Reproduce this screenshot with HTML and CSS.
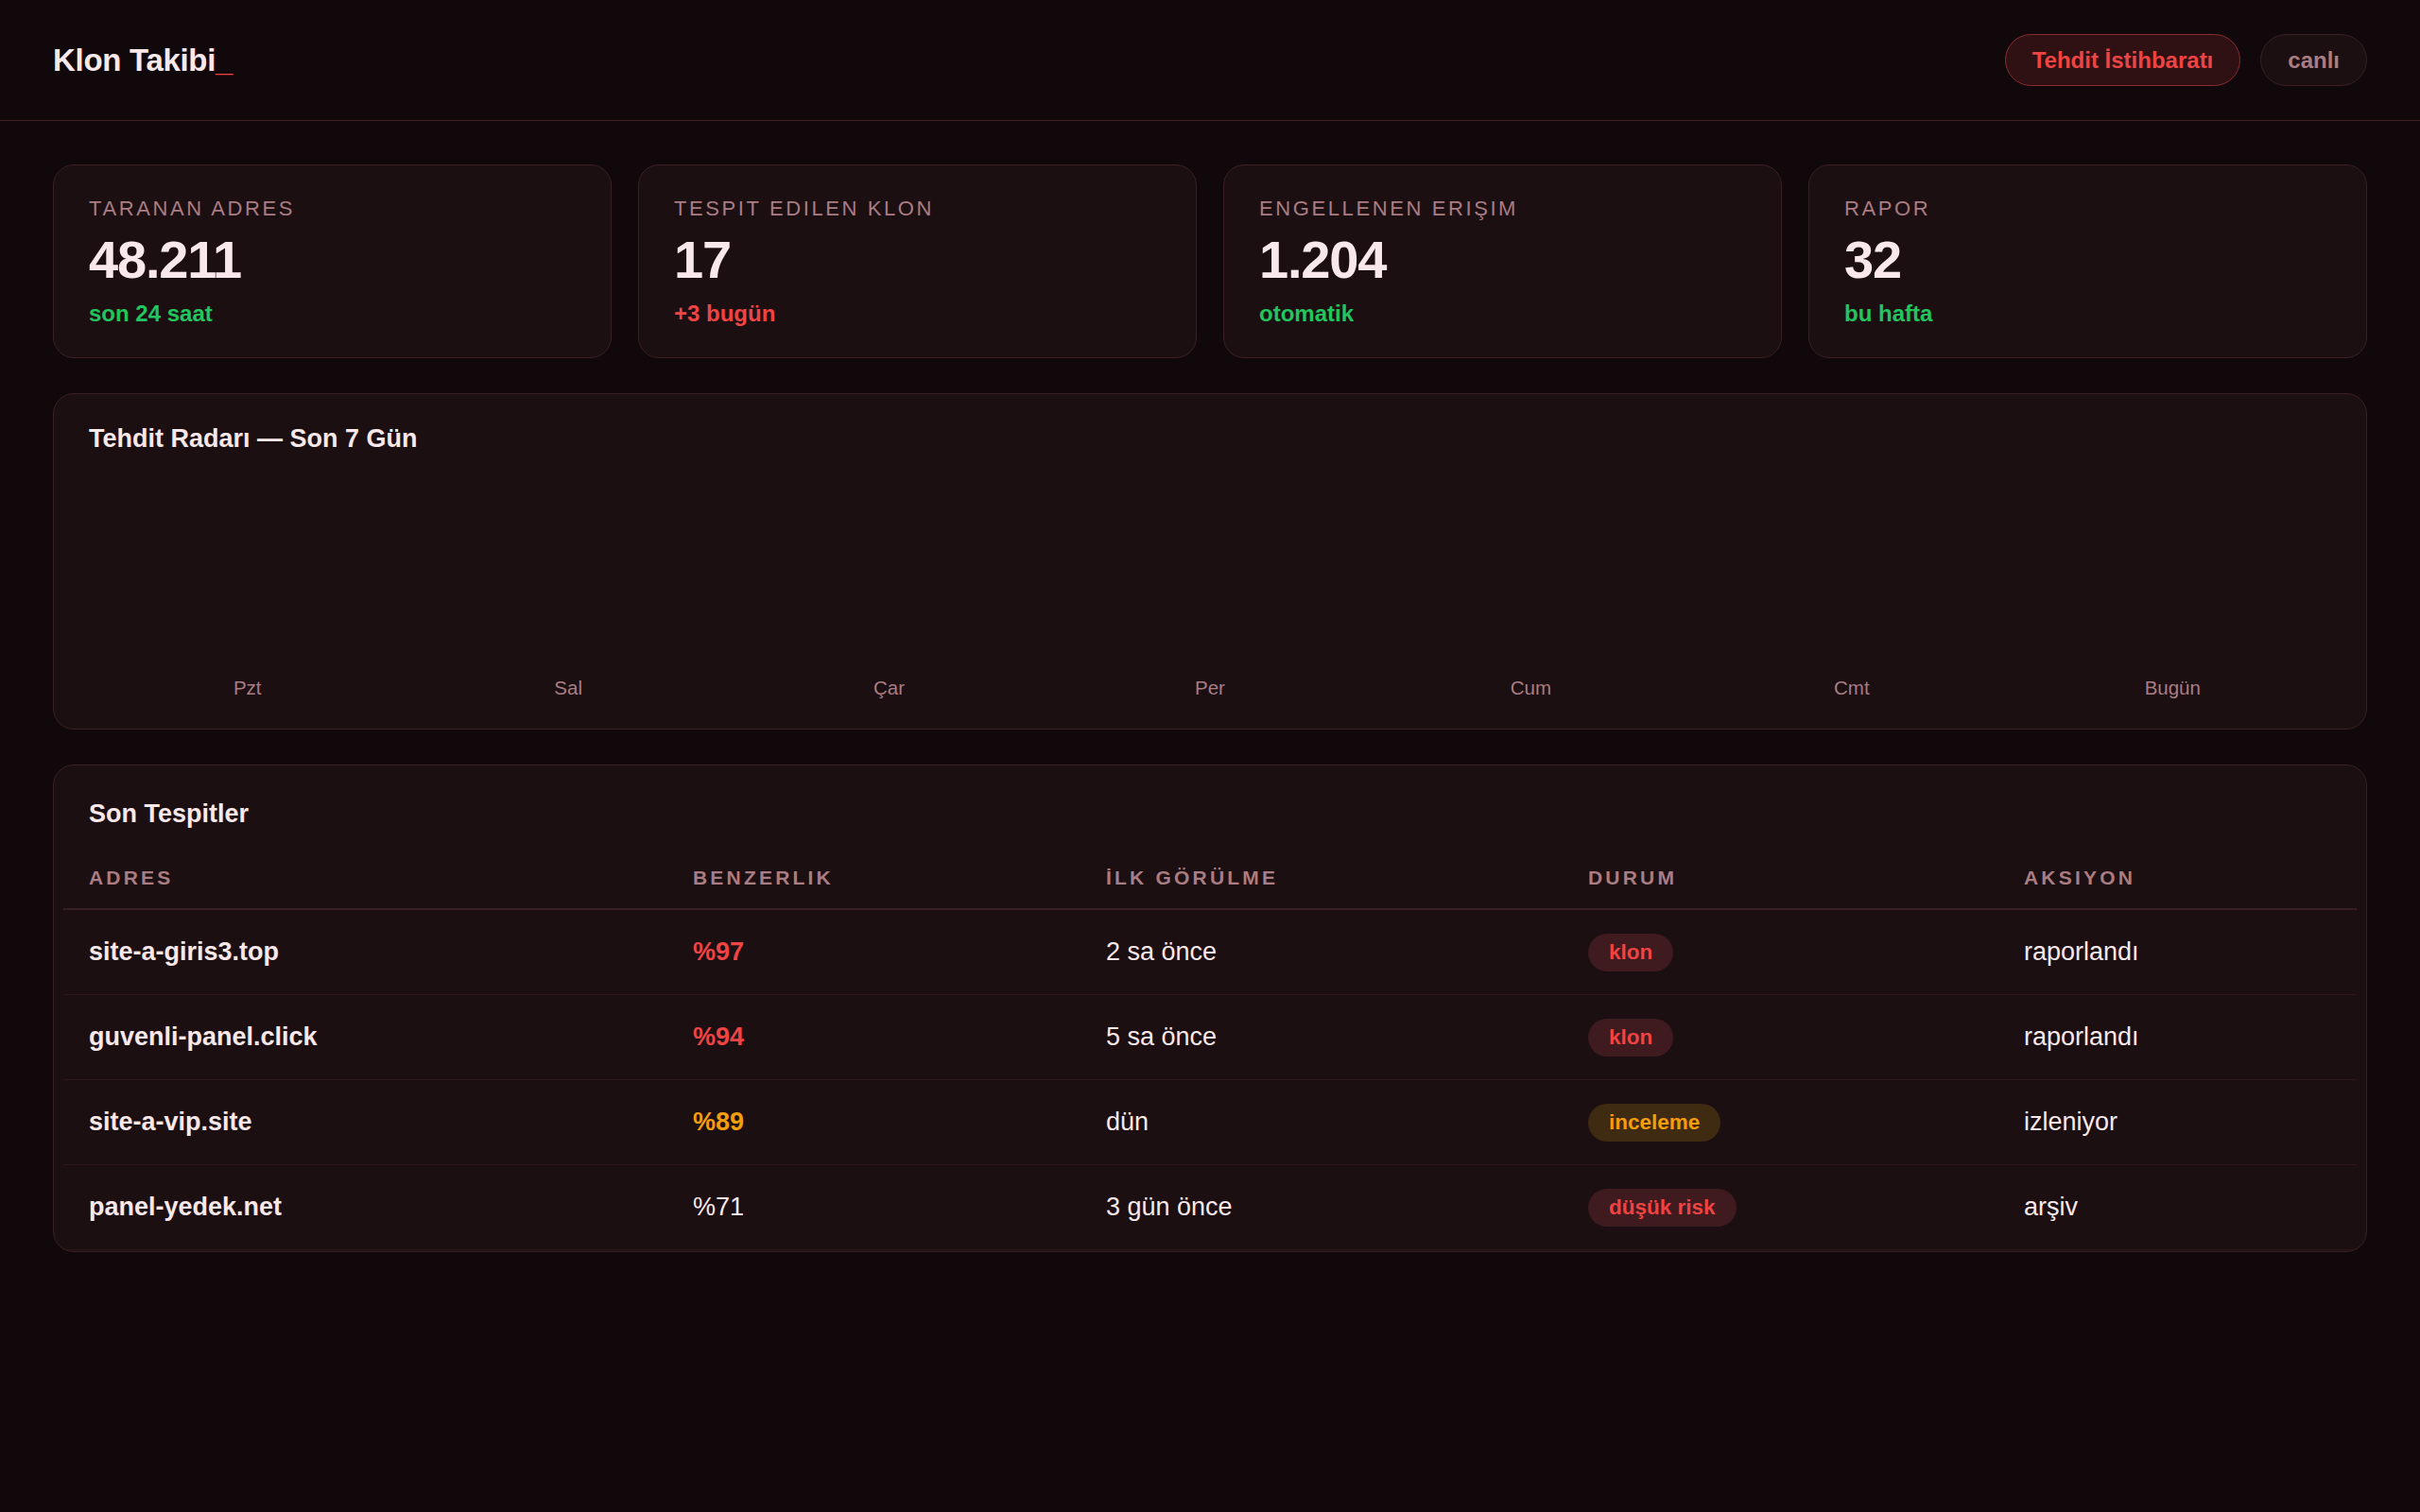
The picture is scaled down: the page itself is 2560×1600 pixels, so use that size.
FILE: index.html
```html
<!DOCTYPE html>
<html lang="en">
	<head>
		<meta charset="UTF-8">
		<title>Klon Takibi</title>
		<link rel="stylesheet" href="styles.css">
	</head>

	<body>
		<!--üst bar-->
		<header class="topbar">
			<h1 class="logo">Klon Takibi<span class="cursor">_</span></h1>
			<div class="actions">
				<a href="#" class="pill pill-red">Tehdit İstihbaratı</a>
				<a href="#" class="pill">canlı</a>
			</div>
		</header>

		<main class="main">
			<!--özet kartları-->
			<section class="stats">
				<div class="card stat">
					<p class="stat-label">Taranan Adres</p>
					<p class="stat-value">48.211</p>
					<p class="stat-sub green">son 24 saat</p>
				</div>
				<div class="card stat">
					<p class="stat-label">Tespit Edilen Klon</p>
					<p class="stat-value">17</p>
					<p class="stat-sub red">+3 bugün</p>
				</div>
				<div class="card stat">
					<p class="stat-label">ENGELLENEN ERIŞIM</p>
					<p class="stat-value">1.204</p>
					<p class="stat-sub green">otomatik</p>
				</div>
				<div class="card stat">
					<p class="stat-label">Rapor</p>
					<p class="stat-value">32</p>
					<p class="stat-sub green">bu hafta</p>
				</div>
			</section>

			<!--grafik-->
			<section class="card radar">
				<h2 class="card-title">Tehdit Radarı — Son 7 Gün</h2>
				<div class="chart">
					<div class="day"><div class="bar"></div><span>Pzt</span></div>
					<div class="day"><div class="bar"></div><span>Sal</span></div>
					<div class="day"><div class="bar"></div><span>Çar</span></div>
					<div class="day"><div class="bar"></div><span>Per</span></div>
					<div class="day"><div class="bar"></div><span>Cum</span></div>
					<div class="day"><div class="bar"></div><span>Cmt</span></div>
					<div class="day"><div class="bar"></div><span>Bugün</span></div>
				</div>
			</section>

			<!--son tespitler-->
			<section class="card list">
				<h2 class="card-title">Son Tespitler</h2>
				<table class="table">
					<colgroup>
						<col class="c1"><col class="c2"><col class="c3"><col class="c4"><col class="c5">
					</colgroup>
					<thead>
						<tr>
							<th>Adres</th>
							<th>Benzerlik</th>
							<th>İlk Görülme</th>
							<th>Durum</th>
							<th>AKSIYON</th>
						</tr>
					</thead>
					<tbody>
						<tr>
							<td class="addr">site-a-giris3.top</td>
							<td class="score red">%97</td>
							<td>2 sa önce</td>
							<td><span class="tag tag-red">klon</span></td>
							<td>raporlandı</td>
						</tr>
						<tr>
							<td class="addr">guvenli-panel.click</td>
							<td class="score red">%94</td>
							<td>5 sa önce</td>
							<td><span class="tag tag-red">klon</span></td>
							<td>raporlandı</td>
						</tr>
						<tr>
							<td class="addr">site-a-vip.site</td>
							<td class="score orange">%89</td>
							<td>dün</td>
							<td><span class="tag tag-orange">inceleme</span></td>
							<td>izleniyor</td>
						</tr>
						<tr>
							<td class="addr">panel-yedek.net</td>
							<td>%71</td>
							<td>3 gün önce</td>
							<td><span class="tag tag-red">düşük risk</span></td>
							<td>arşiv</td>
						</tr>
					</tbody>
				</table>
			</section>
		</main>
	</body>
</html>
```

FILE: styles.css
```css
*{
	margin: 0;
	padding: 0;
	box-sizing: border-box;
}
body{
	background: #10080a;
	color: #f8e8ea;
	font-family: "Liberation Sans", Arial, sans-serif;
}

/* üst bar */
.topbar{
	display: flex;
	align-items: center;
	justify-content: space-between;
	padding: 36px 56px;
	border-bottom: 1px solid #3a1f23;
}
.logo{
	font-size: 33px;
	line-height: 36px;
	letter-spacing: -0.3px;
	font-weight: bold;
}
.logo .cursor{
	color: #ef4444;
	letter-spacing: 0;
}
.actions{
	display: flex;
	gap: 21px;
}
.pill{
	display: block;
	padding: 12px 28px;
	font-size: 24px;
	line-height: 29px;
	font-weight: bold;
	text-decoration: none;
	color: #a97d83;
	background: #1c0f12;
	border: 1px solid #3a2024;
	border-radius: 30px;
}
.pill-red{
	color: #ef4444;
	background: #2f1113;
	border-color: #8a2c30;
}

/* içerik */
.main{
	padding: 46px 56px;
}
.card{
	background: #1c0f12;
	border: 1px solid #3a2024;
	border-radius: 22px;
}
.stats{
	display: grid;
	grid-template-columns: repeat(4, 1fr);
	gap: 28px;
	margin-bottom: 37px;
}
.stat{
	padding: 33px 37px 33px;
}
.stat-label{
	font-size: 22px;
	line-height: 26px;
	letter-spacing: 2.6px;
	text-transform: uppercase;
	color: #a97d83;
}
.stat-value{
	margin-top: 9px;
	font-size: 56px;
	line-height: 64px;
	letter-spacing: -1.2px;
	font-weight: bold;
}
.stat-sub{
	margin-top: 12px;
	font-size: 24px;
	line-height: 26px;
	font-weight: bold;
}
.green{
	color: #22c55e;
}
.red{
	color: #ef4444;
}
.orange{
	color: #f59e0b;
}

.card-title{
	font-size: 27px;
	line-height: 31px;
	font-weight: bold;
}

/* grafik */
.radar{
	padding: 32px 37px 31px;
	margin-bottom: 37px;
}
.chart{
	display: grid;
	grid-template-columns: repeat(7, 1fr);
	gap: 4px;
	margin-top: 12px;
}
.day{
	display: flex;
	flex-direction: column;
	align-items: center;
	justify-content: flex-end;
	height: 248px;
}
.day .bar{
	width: 60%;
	height: 0;
	background: #ef4444;
	border-radius: 8px 8px 0 0;
}
.day span{
	margin-top: 12px;
	font-size: 20.5px;
	line-height: 24px;
	color: #a97d83;
}

/* tablo */
.list{
	padding: 36px 37px 1px;
}
.list .card-title{
	margin-bottom: 18px;
}
.table{
	width: calc(100% + 54px);
	margin: 0 -27px;
	border-collapse: separate;
	border-spacing: 0;
	table-layout: fixed;
}
.table .c1{ width: 639px; }
.table .c2{ width: 437px; }
.table .c3{ width: 510px; }
.table .c4{ width: 461px; }
.table th{
	padding: 22px 27px 20px;
	text-align: left;
	font-size: 21px;
	line-height: 24px;
	letter-spacing: 3.2px;
	text-transform: uppercase;
	color: #a97d83;
	border-bottom: 2px solid #3a2024;
}
.table td{
	height: 90px;
	padding: 0 27px;
	font-size: 27px;
	line-height: 31px;
	vertical-align: middle;
	border-bottom: 1px solid #2c171b;
}
.table .addr,
.table .score{
	font-weight: bold;
}
.tag{
	display: inline-block;
	padding: 7px 22px;
	font-size: 22.5px;
	line-height: 26px;
	font-weight: bold;
	border-radius: 20px;
	vertical-align: middle;
}
.tag-red{
	color: #ef4444;
	background: #3f1a1e;
}
.tag-orange{
	color: #f59e0b;
	background: #3f2a12;
}
```
